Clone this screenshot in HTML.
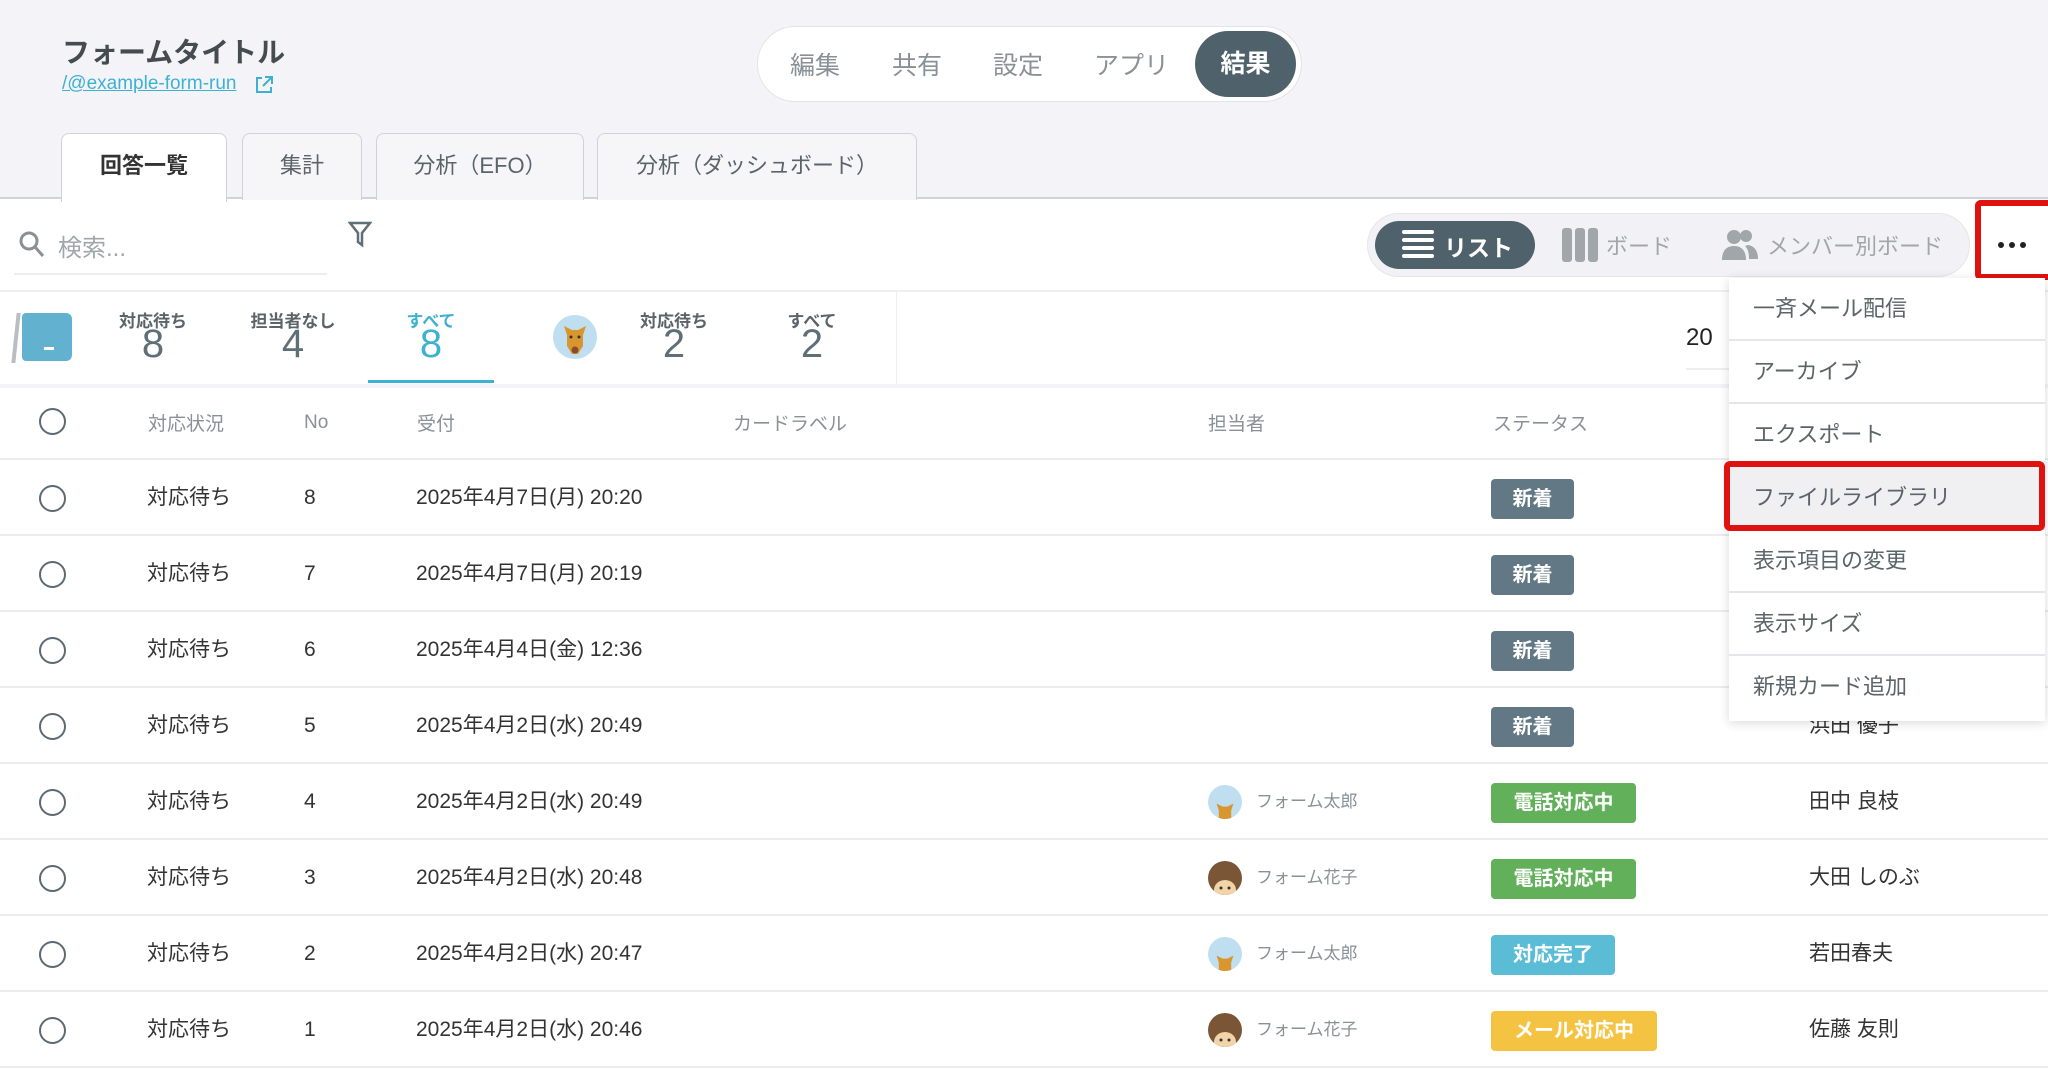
<!DOCTYPE html>
<html><head><meta charset="utf-8"><style>
*{margin:0;padding:0;box-sizing:border-box}
body{width:2048px;height:1071px;overflow:hidden;background:#fff;font-family:"Liberation Sans","Noto Sans CJK JP",sans-serif;color:#333;position:relative}
.a{position:absolute}
.hdr{left:0;top:0;width:2048px;height:199px;background:#f4f4f8;border-bottom:2px solid #cfd3d8}
.nav{left:757px;top:26px;width:545px;height:76px;border:1px solid #e3e3e8;border-radius:38px;background:#fff}
.nav span{position:absolute;top:19px;font-size:25px;color:#8a9196}
.tab{top:133px;height:67px;border:1px solid #cfd3d8;border-bottom:none;border-radius:8px 8px 0 0;background:#f6f6f9;font-size:22px;color:#5a6469;text-align:center;line-height:64px}
.row{left:0;width:2048px;height:76px;border-bottom:2px solid #ececee}
.row div{position:absolute;top:0;line-height:76px;font-size:21px;color:#333}
.circ{width:27px;height:27px;border:2px solid #5b6a73;border-radius:50%;top:25px!important;left:39px}
.badge{top:19px!important;height:40px;line-height:40px!important;color:#fff!important;font-weight:bold;font-size:20px!important;border-radius:4px;text-align:center}
.th{top:409px;font-size:19px;color:#8a9196}
.mi{left:1729px;width:316px;height:63px;border-bottom:2px solid #e6e6ea;font-size:22px;color:#5a6469;padding-left:24px;line-height:61px;background:#fff}
.av{width:34px;height:34px;border-radius:50%;top:21px!important;overflow:hidden}
.stl{font-size:17px;color:#5a6469;font-weight:bold;text-align:center;width:120px}
.stn{font-size:40px;color:#5f6f78;text-align:center;width:120px}
</style></head><body>
<div class="a hdr"></div>
<div class="a" style="left:62px;top:31px;font-size:28px;font-weight:bold;color:#444c52">フォームタイトル</div>
<div class="a" style="left:62px;top:73px;font-size:19px;color:#3db2d0;text-decoration:underline">/@example-form-run</div>
<svg class="a" style="left:254px;top:75px" width="20" height="20" viewBox="0 0 20 20" fill="none" stroke="#3db2d0" stroke-width="2"><path d="M8 3H3v14h14v-5M11 2h7v7M18 2l-9 9"/></svg>
<div class="a nav">
<span style="left:32px">編集</span><span style="left:134px">共有</span><span style="left:235px">設定</span><span style="left:336px">アプリ</span>
<div class="a" style="left:437px;top:4px;width:101px;height:66px;border-radius:33px;background:#4f616b;color:#fff;font-size:25px;font-weight:bold;text-align:center;line-height:66px">結果</div>
</div>
<div class="a tab" style="left:61px;width:166px;background:#fff;height:69px;font-weight:bold;color:#333">回答一覧</div>
<div class="a tab" style="left:242px;width:120px">集計</div>
<div class="a tab" style="left:376px;width:208px">分析（EFO）</div>
<div class="a tab" style="left:597px;width:320px">分析（ダッシュボード）</div>

<svg class="a" style="left:18px;top:230px" width="28" height="30" viewBox="0 0 28 30" fill="none" stroke="#8a9196" stroke-width="3"><circle cx="11" cy="11" r="8"/><path d="M17 17l8 9"/></svg>
<div class="a" style="left:58px;top:228px;font-size:24px;color:#a0a6aa">検索...</div>
<div class="a" style="left:14px;top:273px;width:313px;height:2px;background:#eceef0"></div>
<svg class="a" style="left:348px;top:220px" width="24" height="28" viewBox="0 0 24 28" fill="none" stroke="#5f6f78" stroke-width="2.5"><path d="M2 3h20l-8 10v12l-4-3v-9z"/></svg>

<div class="a" style="left:1367px;top:213px;width:603px;height:64px;border-radius:32px;background:#f2f2f6;border:1px solid #e6e6ea"></div>
<div class="a" style="left:1375px;top:221px;width:160px;height:48px;border-radius:24px;background:#4f616b"></div>
<svg class="a" style="left:1402px;top:228px" width="32" height="34" viewBox="0 0 32 34" fill="#fff"><rect y="2" width="32" height="4" rx="2"/><rect y="10" width="32" height="4" rx="2"/><rect y="18" width="32" height="4" rx="2"/><rect y="26" width="32" height="4" rx="2"/></svg>
<div class="a" style="left:1444px;top:229px;font-size:23px;color:#fff;font-weight:bold">リスト</div>
<svg class="a" style="left:1562px;top:228px" width="36" height="34" viewBox="0 0 36 34" fill="#a0a6aa"><rect width="10" height="34" rx="3"/><rect x="13" width="10" height="34" rx="3"/><rect x="26" width="10" height="34" rx="3"/></svg>
<div class="a" style="left:1606px;top:229px;font-size:22px;color:#a0a6aa">ボード</div>
<svg class="a" style="left:1722px;top:228px" width="36" height="34" viewBox="0 0 36 34" fill="#a0a6aa"><circle cx="12" cy="9" r="7"/><path d="M0 32c0-10 5-14 12-14s12 4 12 14z"/><circle cx="24" cy="8" r="6"/><path d="M26 17c6 1 10 5 10 14h-9c0-6-1-10-4-13z"/></svg>
<div class="a" style="left:1767px;top:229px;font-size:22px;color:#a0a6aa">メンバー別ボード</div>
<div class="a" style="left:1975px;top:200px;width:73px;height:80px;border:6px solid #e0120f;border-right:none;border-radius:6px 0 0 6px;background:#fff"></div>
<div class="a" style="left:1998px;top:242px;width:6px;height:6px;border-radius:50%;background:#222"></div>
<div class="a" style="left:2009px;top:242px;width:6px;height:6px;border-radius:50%;background:#222"></div>
<div class="a" style="left:2020px;top:242px;width:6px;height:6px;border-radius:50%;background:#222"></div>

<div class="a" style="left:0;top:290px;width:2048px;height:2px;background:#eeeff2"></div>
<div class="a" style="left:0;top:384px;width:2048px;height:4px;background:#f4f4f6"></div>
<div class="a" style="left:14px;top:313px;width:4px;height:50px;background:#b9bec2;transform:skewX(-6deg)"></div>
<div class="a" style="left:22px;top:313px;width:50px;height:48px;background:#62b2cf;border-radius:4px 6px 6px 4px"></div>
<div class="a" style="left:44px;top:347px;width:10px;height:3px;background:#fff"></div>
<div class="a stl" style="left:93px;top:307px">対応待ち</div><div class="a stn" style="left:93px;top:322px">8</div>
<div class="a stl" style="left:233px;top:307px">担当者なし</div><div class="a stn" style="left:233px;top:322px">4</div>
<div class="a stl" style="left:371px;top:307px;color:#3db2d0">すべて</div><div class="a stn" style="left:371px;top:322px;color:#3db2d0">8</div>
<div class="a" style="left:368px;top:380px;width:126px;height:3px;background:#3db2d0"></div>
<svg class="a" style="left:553px;top:315px" width="44" height="44" viewBox="0 0 44 44"><circle cx="22" cy="22" r="22" fill="#bfdff0"/><path d="M11 11l8 4h6l8-4-3 9v11l-5 8h-6l-5-8V20z" fill="#d9962f"/><circle cx="18" cy="22" r="1.5" fill="#333"/><circle cx="26" cy="22" r="1.5" fill="#333"/><ellipse cx="22" cy="35" rx="3.5" ry="3.5" fill="#8a4b2a"/></svg>
<div class="a stl" style="left:614px;top:307px">対応待ち</div><div class="a stn" style="left:614px;top:322px">2</div>
<div class="a stl" style="left:752px;top:307px">すべて</div><div class="a stn" style="left:752px;top:322px">2</div>
<div class="a" style="left:896px;top:292px;width:1px;height:92px;background:#eceef0"></div>
<div class="a" style="left:1686px;top:324px;font-size:24px;color:#222">20</div>
<div class="a" style="left:1686px;top:368px;width:50px;height:2px;background:#eceef0"></div>

<div class="a" style="left:39px;top:408px;width:27px;height:27px;border:2px solid #5b6a73;border-radius:50%"></div>
<div class="a th" style="left:148px">対応状況</div>
<div class="a th" style="left:304px;top:412px">No</div>
<div class="a th" style="left:417px">受付</div>
<div class="a th" style="left:733px">カードラベル</div>
<div class="a th" style="left:1208px">担当者</div>
<div class="a th" style="left:1493px">ステータス</div>
<div class="a" style="left:0;top:458px;width:2048px;height:2px;background:#ececee"></div>

<div class="a row" style="top:460px"><div class="circ"></div><div style="left:147px">対応待ち</div><div style="left:304px">8</div><div style="left:416px">2025年4月7日(月) 20:20</div><div class="badge" style="left:1491px;width:83px;background:#627985">新着</div></div>
<div class="a row" style="top:536px"><div class="circ"></div><div style="left:147px">対応待ち</div><div style="left:304px">7</div><div style="left:416px">2025年4月7日(月) 20:19</div><div class="badge" style="left:1491px;width:83px;background:#627985">新着</div></div>
<div class="a row" style="top:612px"><div class="circ"></div><div style="left:147px">対応待ち</div><div style="left:304px">6</div><div style="left:416px">2025年4月4日(金) 12:36</div><div class="badge" style="left:1491px;width:83px;background:#627985">新着</div></div>
<div class="a row" style="top:688px"><div class="circ"></div><div style="left:147px">対応待ち</div><div style="left:304px">5</div><div style="left:416px">2025年4月2日(水) 20:49</div><div class="badge" style="left:1491px;width:83px;background:#627985">新着</div><div style="left:1809px">浜田 優子</div></div>
<div class="a row" style="top:764px"><div class="circ"></div><div style="left:147px">対応待ち</div><div style="left:304px">4</div><div style="left:416px">2025年4月2日(水) 20:49</div>
<div class="av" style="left:1208px;background:#bfdff0"><svg width="34" height="34" viewBox="0 0 44 44"><path d="M11 11l8 4h6l8-4-3 9v11l-5 8h-6l-5-8V20z" fill="#d9962f"/><ellipse cx="22" cy="35" rx="3.5" ry="3.5" fill="#8a4b2a"/></svg></div>
<div style="left:1256px;font-size:17px;color:#8a9196">フォーム太郎</div><div class="badge" style="left:1491px;width:145px;background:#62b05a">電話対応中</div><div style="left:1809px">田中 良枝</div></div>
<div class="a row" style="top:840px"><div class="circ"></div><div style="left:147px">対応待ち</div><div style="left:304px">3</div><div style="left:416px">2025年4月2日(水) 20:48</div>
<div class="av" style="left:1208px;background:#7a5536"><svg width="34" height="34" viewBox="0 0 34 34"><ellipse cx="17" cy="19" rx="11" ry="10" fill="#f3d3a8"/><circle cx="13" cy="17" r="1.5" fill="#333"/><circle cx="21" cy="17" r="1.5" fill="#333"/></svg></div>
<div style="left:1256px;font-size:17px;color:#8a9196">フォーム花子</div><div class="badge" style="left:1491px;width:145px;background:#62b05a">電話対応中</div><div style="left:1809px">大田 しのぶ</div></div>
<div class="a row" style="top:916px"><div class="circ"></div><div style="left:147px">対応待ち</div><div style="left:304px">2</div><div style="left:416px">2025年4月2日(水) 20:47</div>
<div class="av" style="left:1208px;background:#bfdff0"><svg width="34" height="34" viewBox="0 0 44 44"><path d="M11 11l8 4h6l8-4-3 9v11l-5 8h-6l-5-8V20z" fill="#d9962f"/><ellipse cx="22" cy="35" rx="3.5" ry="3.5" fill="#8a4b2a"/></svg></div>
<div style="left:1256px;font-size:17px;color:#8a9196">フォーム太郎</div><div class="badge" style="left:1491px;width:124px;background:#5bbcd6">対応完了</div><div style="left:1809px">若田春夫</div></div>
<div class="a row" style="top:992px"><div class="circ"></div><div style="left:147px">対応待ち</div><div style="left:304px">1</div><div style="left:416px">2025年4月2日(水) 20:46</div>
<div class="av" style="left:1208px;background:#7a5536"><svg width="34" height="34" viewBox="0 0 34 34"><ellipse cx="17" cy="19" rx="11" ry="10" fill="#f3d3a8"/><circle cx="13" cy="17" r="1.5" fill="#333"/><circle cx="21" cy="17" r="1.5" fill="#333"/></svg></div>
<div style="left:1256px;font-size:17px;color:#8a9196">フォーム花子</div><div class="badge" style="left:1491px;width:166px;background:#f5c342">メール対応中</div><div style="left:1809px">佐藤 友則</div></div>

<div class="a" style="left:1729px;top:278px;width:316px;height:443px;box-shadow:0 2px 10px rgba(0,0,0,.15);background:#fff"></div>
<div class="a mi" style="top:278px">一斉メール配信</div>
<div class="a mi" style="top:341px">アーカイブ</div>
<div class="a mi" style="top:404px">エクスポート</div>
<div class="a mi" style="top:467px;background:#f0f0f2">ファイルライブラリ</div>
<div class="a mi" style="top:530px">表示項目の変更</div>
<div class="a mi" style="top:593px">表示サイズ</div>
<div class="a mi" style="top:656px;border-bottom:none">新規カード追加</div>
<div class="a" style="left:1724px;top:461px;width:321px;height:70px;border:6px solid #e0120f;border-radius:6px"></div>
</body></html>
